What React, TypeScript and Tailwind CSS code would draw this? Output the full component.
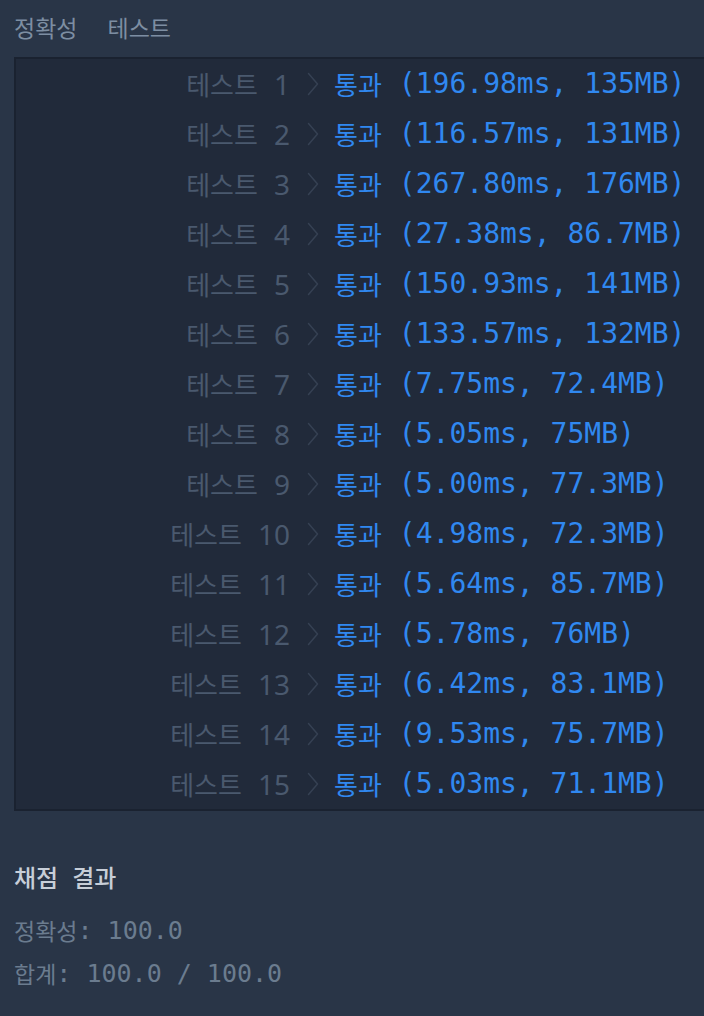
const results = [
  { n: 1, time: '196.98ms', mem: '135MB' },
  { n: 2, time: '116.57ms', mem: '131MB' },
  { n: 3, time: '267.80ms', mem: '176MB' },
  { n: 4, time: '27.38ms', mem: '86.7MB' },
  { n: 5, time: '150.93ms', mem: '141MB' },
  { n: 6, time: '133.57ms', mem: '132MB' },
  { n: 7, time: '7.75ms', mem: '72.4MB' },
  { n: 8, time: '5.05ms', mem: '75MB' },
  { n: 9, time: '5.00ms', mem: '77.3MB' },
  { n: 10, time: '4.98ms', mem: '72.3MB' },
  { n: 11, time: '5.64ms', mem: '85.7MB' },
  { n: 12, time: '5.78ms', mem: '76MB' },
  { n: 13, time: '6.42ms', mem: '83.1MB' },
  { n: 14, time: '9.53ms', mem: '75.7MB' },
  { n: 15, time: '5.03ms', mem: '71.1MB' },
];

const kr = "font-['Noto_Sans_CJK_KR',sans-serif]";
const mono = "font-['DejaVu_Sans_Mono','Noto_Sans_CJK_KR',monospace]";

function Chevron() {
  return (
    <svg width="12" height="24" viewBox="0 0 12 24" fill="none" className="shrink-0">
      <path d="M1.5 1.5 L10.5 12 L1.5 22.5" stroke="#364153" strokeWidth="1.5" strokeLinecap="round" strokeLinejoin="round" />
    </svg>
  );
}

function ResultRow({ n, time, mem }: { n: number; time: string; mem: string }) {
  return (
    <div className="flex h-[50px] items-center">
      <div className="flex w-[274px] shrink-0 items-center justify-end text-[#4a596e]">
        <span className={`${kr} text-[26px] leading-none`}>테스트</span>
        <span className="ml-[16px] font-['Noto_Sans',sans-serif] text-[28px] leading-none">{n}</span>
      </div>
      <div className="ml-[17px]">
        <Chevron />
      </div>
      <div className="ml-[15px] flex items-center whitespace-nowrap text-[#3088f0]">
        <span className={`${kr} text-[26px] leading-none`}>통과</span>
        <span className={`${mono} ml-[17px] text-[28px] leading-none`}>
          ({time}, {mem})
        </span>
      </div>
    </div>
  );
}

export default function App() {
  return (
    <div className="h-[1016px] w-[704px] overflow-hidden bg-[#293547]">
      <div className={`${kr} flex pt-[11px] pl-[14px] text-[23px] leading-[32px] text-[#7d8ea2]`}>
        <span>정확성</span>
        <span className="ml-[30px]">테스트</span>
      </div>

      <div className="mt-[14px] ml-[14px] w-[720px] border-2 border-[#1a2230] bg-[#212a3a]">
        {results.map(r => (
          <ResultRow key={r.n} {...r} />
        ))}
      </div>

      <div className="px-[14px]">
        <h2 className={`${kr} mt-[50px] flex text-[24px] leading-[32px] font-medium text-[#c7ced8]`}>
          <span>채점</span>
          <span className="ml-[14px]">결과</span>
        </h2>
        <div className="mt-[16px] text-[#6b7c8f]">
          <div className="flex h-[43px] items-center">
            <span className={`${kr} text-[23px]`}>정확성</span>
            <span className={`${mono} text-[25px] whitespace-pre`}>: 100.0</span>
          </div>
          <div className="flex h-[43px] items-center">
            <span className={`${kr} text-[23px]`}>합계</span>
            <span className={`${mono} text-[25px] whitespace-pre`}>: 100.0 / 100.0</span>
          </div>
        </div>
      </div>
    </div>
  );
}
